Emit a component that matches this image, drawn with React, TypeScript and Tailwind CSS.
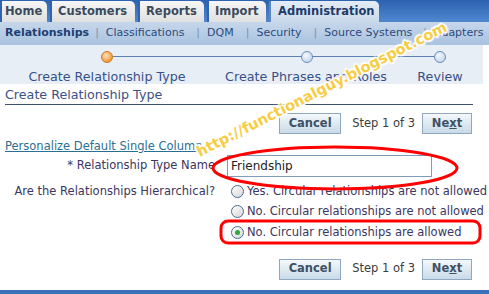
import React from "react";

const font = { fontFamily: '"DejaVu Sans", "Liberation Sans", sans-serif' };

function Tab({ label, w, pl, active }: { label: string; w: number; pl: number; active?: boolean }) {
  return (
    <div
      className={
        "h-[21px] flex items-center rounded-tr-[5px] border-l-[2px] text-[11.5px] font-bold " +
        (active
          ? "bg-gradient-to-b from-[#e4edf6] to-[#c9d9ea] border-[#5f86b8] text-[#1d3b6a]"
          : "bg-gradient-to-b from-[#f6f6f6] to-[#e0e0e0] border-[#2f64ad] text-[#3b4a5c]")
      }
      style={{ width: w, paddingLeft: pl }}
    >
      {label}
    </div>
  );
}

function Sep({ before }: { before: number }) {
  return (
    <span className="text-[#7d93b0] text-[11px] mr-[7px]" style={{ marginLeft: before }}>
      |
    </span>
  );
}

function Btn({ children }: { children: React.ReactNode }) {
  return (
    <div className="h-[21px] flex items-center justify-center border border-[#8fa8c0] bg-gradient-to-b from-[#f4f8fb] to-[#c8dbe8] text-[11.5px] font-bold text-[#3e5064]">
      {children}
    </div>
  );
}

function ButtonRow() {
  return (
    <div className="flex items-center justify-end pr-[17px] h-[21px]">
      <div className="w-[62px]">
        <Btn>Cancel</Btn>
      </div>
      <span className="ml-[11px] mr-[7px] text-[11.5px] text-[#3c3c3c]">Step 1 of 3</span>
      <div className="w-[50px]">
        <Btn>
          Ne<span className="underline">x</span>t
        </Btn>
      </div>
    </div>
  );
}

function Circle({ active }: { active?: boolean }) {
  return (
    <div
      className={
        "w-[12px] h-[12px] rounded-full border " +
        (active
          ? "border-[#c47a2c] bg-[radial-gradient(circle_at_40%_35%,#ffe2b8,#f39a3c_70%)]"
          : "border-[#6a8db8] bg-[radial-gradient(circle_at_40%_35%,#f4f8fc,#c9dbee_70%)]")
      }
    />
  );
}

function Radio({ checked, label }: { checked?: boolean; label: string }) {
  return (
    <div className="flex items-center h-[20.5px]">
      <div className="w-[13px] h-[13px] rounded-full border border-[#4c6c93] bg-gradient-to-br from-[#ffffff] to-[#d6d6d6] flex items-center justify-center">
        {checked && <div className="w-[5px] h-[5px] rounded-full bg-[#2ea83c]" />}
      </div>
      <span className="ml-[3px] text-[11.5px] text-[#3c3660] whitespace-nowrap">{label}</span>
    </div>
  );
}

export default function App() {
  return (
    <div className="relative w-[489px] h-[294px] overflow-hidden bg-white" style={font}>
      {/* tabs */}
      <div className="h-[22px] flex items-end gap-[3px] bg-gradient-to-b from-[#2c62b1] to-[#4f88cf]">
        <Tab label="Home" w={47} pl={3} />
        <Tab label="Customers" w={85} pl={6} />
        <Tab label="Reports" w={66} pl={6} />
        <Tab label="Import" w={59} pl={6} />
        <Tab label="Administration" w={110} pl={7} active />
      </div>
      {/* subnav */}
      <div className="h-[23px] flex items-center pl-[5px] bg-gradient-to-b from-[#c6d7eb] to-[#a9c2df] text-[11px] text-[#2c4a7c] whitespace-nowrap">
        <span className="font-bold text-[#1c3e72]">Relationships</span>
        <Sep before={6} />
        <span>Classifications</span>
        <Sep before={12} />
        <span>DQM</span>
        <Sep before={12} />
        <span>Security</span>
        <Sep before={12} />
        <span>Source Systems</span>
        <Sep before={11} />
        <span>Adapters</span>
      </div>
      {/* train */}
      <div className="relative w-[483px] h-[39px] bg-[#e8eef6]">
        <div className="absolute left-[113px] top-[11px] w-[321px] h-[1px] bg-[#5b82b2]" />
        <div className="absolute left-[101px] top-[6px]"><Circle active /></div>
        <div className="absolute left-[301px] top-[6px]"><Circle /></div>
        <div className="absolute left-[434px] top-[6px]"><Circle /></div>
        <div className="absolute left-0 right-0 top-[22px] flex text-[12.7px] text-[#37508a] whitespace-nowrap">
          <span className="absolute left-[107px] -translate-x-1/2">Create Relationship Type</span>
          <span className="absolute left-[306px] -translate-x-1/2">Create Phrases and Roles</span>
          <span className="absolute left-[440px] -translate-x-1/2">Review</span>
        </div>
      </div>
      {/* heading */}
      <div className="ml-[5px] w-[468px] h-[21px] pt-[3px] border-b border-[#3d5173] text-[12.7px] text-[#3b5186] leading-[16px]">
        Create Relationship Type
      </div>
      <div className="mt-[8px]">
        <ButtonRow />
      </div>
      {/* link */}
      <div className="h-[21px] flex items-end pl-[5px] pb-[2px]">
        <span className="text-[11.5px] text-[#2b6f92] underline leading-[14px]">Personalize Default Single Column</span>
      </div>
      {/* input row */}
      <div className="flex items-center h-[22px]">
        <div className="w-[215px] text-right text-[11.5px] text-[#3c3660]">* Relationship Type Name</div>
        <div className="ml-[12px] w-[205px] h-[22px] border border-[#7f9db9] flex items-center pl-[3px] text-[12px] text-[#222]">
          Friendship
        </div>
      </div>
      {/* radios */}
      <div className="flex mt-[4px]">
        <div className="w-[215px] text-right text-[11.5px] text-[#3c3660] h-[20.5px] flex items-center justify-end">
          Are the Relationships Hierarchical?
        </div>
        <div className="ml-[16px] flex flex-col">
          <Radio label="Yes. Circular relationships are not allowed" />
          <Radio label="No. Circular relationships are not allowed" />
          <Radio checked label="No. Circular relationships are allowed" />
        </div>
      </div>
      <div className="mt-[16px]">
        <ButtonRow />
      </div>
      <div className="absolute left-0 right-0 bottom-0 h-[4px] bg-[#3a70b9]" />

      {/* annotations */}
      <svg className="absolute left-0 top-0 pointer-events-none" width={489} height={294}>
        <ellipse cx={335} cy={168} rx={122} ry={21} fill="none" stroke="#ff0000" strokeWidth={3} />
        <rect x={221} y={221} width={259} height={22} rx={7} fill="none" stroke="#ff0000" strokeWidth={3} />
      </svg>
      <div
        className="absolute left-[322px] top-[90px] -translate-x-1/2 -translate-y-1/2 rotate-[-27deg] whitespace-nowrap text-[14.5px] font-bold text-[#f6cd45] pointer-events-none"
        style={{
          textShadow:
            "0 0 2px #fff, 0 0 3px #fff, 2px 0 1px #fff, -2px 0 1px #fff, 0 2px 1px #fff, 0 -2px 1px #fff, 1px 1px 2px #fffbe8, -1px -1px 2px #fffbe8",
        }}
      >
        http://functionalguy.blogspot.com
      </div>
    </div>
  );
}
